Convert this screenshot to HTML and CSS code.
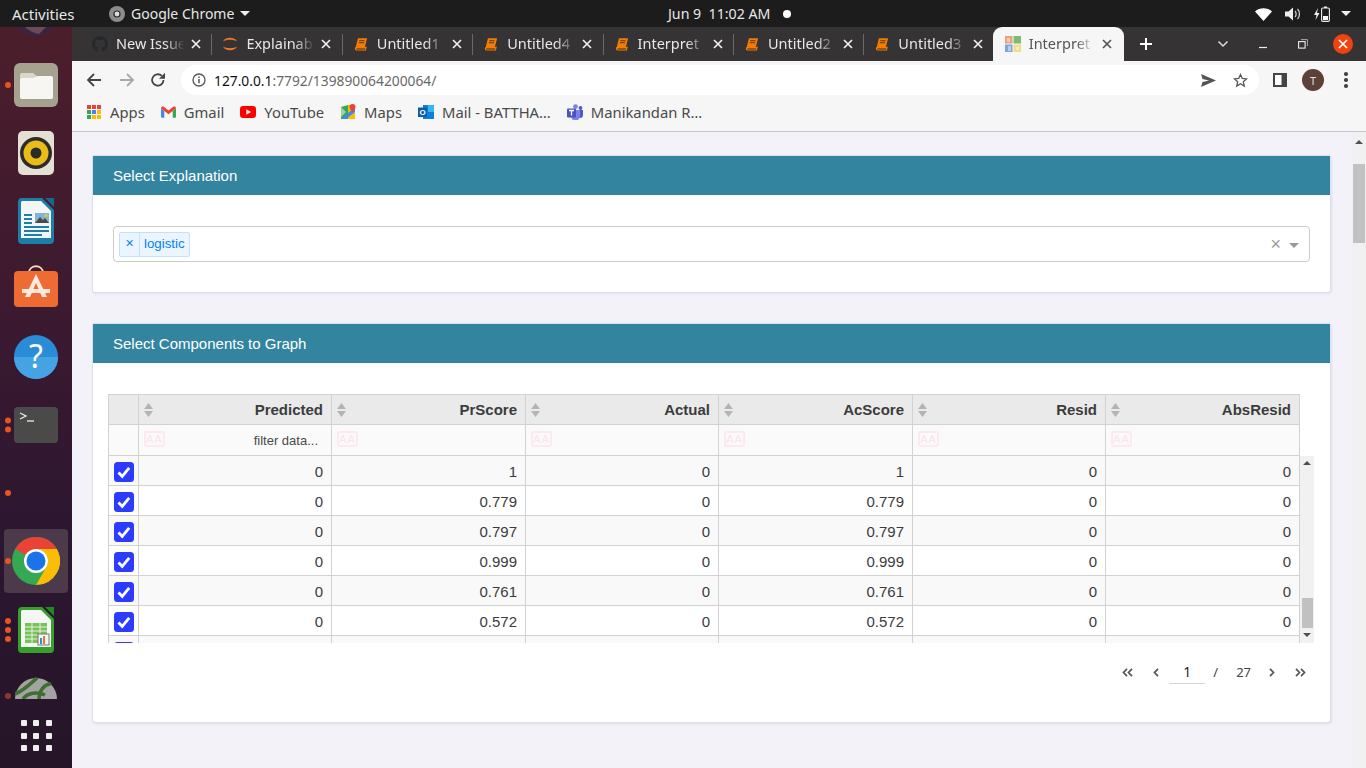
FILE: index.html
```html
<!DOCTYPE html>
<html lang="en">
<head>
<meta charset="utf-8">
<title>Interpret</title>
<link rel="stylesheet" href="styles.css">
</head>
<body>
<svg class="defs" width="0" height="0">
  <symbol id="book" viewBox="0 0 16 16"><path d="M4.500 1.500h10.500l-2.600 10H2z" fill="#f57c00"/><path d="M1 13.200c0-1.200.6-1.700 1.600-1.700h10.200l1.600-1v1.600l-.8 3.400H3c-1.300 0-2-.9-2-2.300z" fill="#f57c00"/><path d="M2.600 13h10.300l-.4 1.400H2.800z" fill="#353334"/><path d="M6 4.200h6M5.500 6.500h6" stroke="#353334" stroke-width="1"/></symbol>
  <symbol id="x" viewBox="0 0 10 10"><path d="M1 1l8 8M9 1l-8 8" stroke="currentColor" stroke-width="1.700" fill="none"/></symbol>
  <symbol id="sort" viewBox="0 0 9 14"><path d="M4.500 0L9 6H0zM0 8h9l-4.500 6z" fill="#b4b4b4"/></symbol>
  <symbol id="chk" viewBox="0 0 20 20"><rect width="20" height="20" rx="3.500" fill="#2b3cff"/><path d="M4.500 10.500l3.700 3.800 7-8.500" fill="none" stroke="#fff" stroke-width="2.800"/></symbol>
</svg>

<header class="topbar">
  <span class="activities">Activities</span>
  <span class="app">
    <svg class="app-ico" width="16" height="16" viewBox="0 0 16 16"><circle cx="8" cy="8" r="8" fill="#8c8c8c"/><circle cx="8" cy="8" r="3.600" fill="#2a2a2a"/><circle cx="8" cy="8" r="2.400" fill="#ddd"/></svg>
    Google Chrome<i class="caret"></i>
  </span>
  <span class="clock">Jun 9 &nbsp;11:02 AM<i class="rec"></i></span>
  <span class="tray">
    <svg width="17" height="14" viewBox="0 0 17 14"><path d="M0 4.500C4.500.2 12.500.2 17 4.500L8.500 14z" fill="#fff"/></svg>
    <svg width="16" height="14" viewBox="0 0 16 14"><path d="M0 4.500h3.500L8 .5v13l-4.500-4H0z" fill="#eee"/><path d="M10 4c1.500 1.500 1.500 4.500 0 6M12.500 2c2.600 2.600 2.600 7.400 0 10" stroke="#ccc" stroke-width="1.300" fill="none"/></svg>
    <svg width="16" height="16" viewBox="0 0 16 16"><path d="M4 2L0 9h2.500L1.500 14 5.500 7H3z" fill="#eee"/><rect x="7.600" y="2" width="7.800" height="13.400" rx="1.300" fill="none" stroke="#eee" stroke-width="1.100"/><rect x="10" y=".5" width="3" height="1.500" fill="#eee"/><rect x="9" y="10" width="5" height="4" fill="#fff"/></svg>
    <i class="caret tray-caret"></i>
  </span>
</header>

<div class="main">
  <nav class="dock">
    <div class="d-item d-top"><svg width="42" height="10" viewBox="0 0 42 10"><path d="M2 0c3 5 11 9 19 10 8-1 14-6 18-10z" fill="#3a2440"/><path d="M10 0c3 3 8 6 14 7l7-7z" fill="#6b4a5c"/></svg></div>

    <div class="d-item d-files"><span class="dots"><i></i></span>
      <svg width="44" height="44" viewBox="0 0 44 44"><rect width="44" height="44" rx="6" fill="#a7a18f"/><path d="M6 12a2 2 0 0 1 2-2h11l5 4h13a2 2 0 0 1 2 2v18a2 2 0 0 1-2 2H8a2 2 0 0 1-2-2z" fill="#d9d6ca"/><path d="M6 17a2 2 0 0 1 2-2h11l5-2h13a2 2 0 0 1 2 2v19a2 2 0 0 1-2 2H8a2 2 0 0 1-2-2z" fill="#f7f6f3"/></svg></div>

    <div class="d-item d-rhythm">
      <svg width="36" height="44" viewBox="0 0 36 44"><rect width="36" height="44" rx="5" fill="#e4e0d4"/><circle cx="18" cy="22" r="16" fill="#2d2c2b"/><circle cx="18" cy="22" r="12.500" fill="#e9bc17"/><circle cx="18" cy="22" r="5.500" fill="#2a2a2a"/></svg></div>

    <div class="d-item d-writer">
      <svg width="36" height="46" viewBox="0 0 36 46"><path d="M27 0h9v9z" fill="#15688f"/><path d="M4 0h20l12 12v30a4 4 0 0 1-4 4H4a4 4 0 0 1-4-4V4a4 4 0 0 1 4-4z" fill="#1d7fa8"/><path d="M4 3h19l10 10v27H3V4z" fill="#f4f5f5"/><path d="M6 16h8v2H6zM6 20h8v2H6zM6 24h8v2H6zM6 28h25v2H6zM6 32h25v2H6zM6 36h18v2H6z" fill="#1d7fa8"/><rect x="17" y="15" width="14" height="10" fill="#7fb6d3"/><path d="M17 25l5-6 3 3 2-2 4 5z" fill="#4a4a4a"/><circle cx="28" cy="17.500" r="1.600" fill="#f2c230"/></svg></div>

    <div class="d-item d-store">
      <svg width="44" height="42" viewBox="0 0 44 42"><path d="M15 8c0-9 14-9 14 0" fill="none" stroke="#f1d7b5" stroke-width="1.800"/><rect y="6" width="44" height="36" rx="4" fill="#ee6b34"/><path d="M22 9L11 32h5l6-14 6 14h5z" fill="#fbe9df"/><path d="M8 24h28v4H8z" fill="#fbe9df"/></svg></div>

    <div class="d-item d-help">
      <svg width="44" height="44" viewBox="0 0 44 44"><circle cx="22" cy="22" r="22" fill="#2a8bd6"/><path d="M0 22h44a22 22 0 0 1-44 0z" fill="#45a3e4"/><text x="22" y="33" class="help-q">?</text></svg></div>

    <div class="d-item d-term"><span class="dots"><i></i><i></i></span>
      <svg width="44" height="36" viewBox="0 0 44 36"><rect width="44" height="36" rx="4" fill="#4a4a48"/><path d="M6 6l6 3-6 3" fill="none" stroke="#eee" stroke-width="1.300"/><path d="M13 14h7" stroke="#eee" stroke-width="1.300"/></svg></div>

    <div class="d-item d-ghost"><span class="dots"><i></i></span></div>

    <div class="d-item d-chrome"><span class="dots"><i></i></span>
      <svg width="48" height="48" viewBox="0 0 48 48"><circle cx="24" cy="24" r="24" fill="#34a853"/><path d="M24 0a24 24 0 0 1 20.800 12H24a12 12 0 0 0-10.400 6L3.200 12A24 24 0 0 1 24 0z" fill="#ea4335"/><path d="M44.800 12A24 24 0 0 1 24 48l10.400-18A12 12 0 0 0 24 12z" fill="#fbbc04"/><circle cx="24" cy="24" r="12" fill="#fff"/><circle cx="24" cy="24" r="9.500" fill="#1a73e8"/></svg></div>

    <div class="d-item d-calc"><span class="dots"><i></i><i></i><i></i></span>
      <svg width="36" height="46" viewBox="0 0 36 46"><path d="M27 0h9v9z" fill="#1f8a22"/><path d="M4 0h20l12 12v30a4 4 0 0 1-4 4H4a4 4 0 0 1-4-4V4a4 4 0 0 1 4-4z" fill="#37a02c"/><path d="M4 3h19l10 10v27H3V4z" fill="#f4f5f5"/><path d="M7 16h22v20H7z" fill="#79c257"/><path d="M7 20h22M7 24h22M7 28h22M7 32h22M14 16v20M22 16v20" stroke="#f4f5f5" stroke-width=".9"/><rect x="20" y="27" width="11" height="11" fill="#f4f5f5" stroke="#777"/><path d="M22 31h2v6h-2z" fill="#2b8fd6"/><path d="M25 29h2v8h-2z" fill="#e2762b"/></svg></div>

    <div class="d-item d-partial"><span class="dots dim"><i></i></span>
      <svg width="42" height="22" viewBox="0 0 42 22"><path d="M0 22a21 21 0 0 1 42 0z" fill="#a3a3a3"/><path d="M0 17C8 14 14 8 22 1M24 22C24 14 30 6 36 7M8 22c4-6 14-8 22-4" fill="none" stroke="#3f6e2f" stroke-width="3.500"/></svg></div>

    <div class="d-item d-grid"><span class="apps"><i></i><i></i><i></i><i></i><i></i><i></i><i></i><i></i><i></i></span></div>
  </nav>

  <div class="browser">
    <div class="tabstrip">
      <div class="tab"><svg class="t-ico" width="16" height="16" viewBox="0 0 16 16"><path fill="#24292e" d="M8 0a8 8 0 0 0-2.500 15.600c.4.100.5-.2.500-.4v-1.400c-2.200.5-2.700-1-2.700-1-.4-.9-.9-1.200-.9-1.200-.7-.5.100-.5.100-.5.800.1 1.200.8 1.200.8.700 1.200 1.900.9 2.300.7.100-.5.300-.9.500-1.100-1.800-.2-3.600-.9-3.600-4 0-.9.300-1.600.8-2.100-.1-.2-.4-1 .1-2.100 0 0 .7-.2 2.200.8a7.600 7.600 0 0 1 4 0c1.500-1 2.200-.8 2.200-.8.400 1.100.2 1.900.1 2.100.5.600.8 1.300.8 2.100 0 3.100-1.900 3.700-3.700 3.900.3.300.6.800.6 1.500v2.200c0 .2.100.5.600.4A8 8 0 0 0 8 0z"/></svg><span class="t-label">New Issue</span><svg class="t-x" width="10" height="10"><use href="#x"/></svg></div>
      <div class="tab"><svg class="t-ico" width="16" height="16" viewBox="0 0 16 16"><path d="M1 5.500C3 .5 13 .5 15 5.500 12 3.200 4 3.200 1 5.500zM1 10.500C3 15.500 13 15.500 15 10.500 12 12.800 4 12.800 1 10.500z" fill="#f37726"/></svg><span class="t-label">Explainab</span><svg class="t-x" width="10" height="10"><use href="#x"/></svg></div>
      <div class="tab"><svg class="t-book" width="14" height="14"><use href="#book"/></svg><span class="t-label">Untitled1</span><svg class="t-x" width="10" height="10"><use href="#x"/></svg></div>
      <div class="tab"><svg class="t-book" width="14" height="14"><use href="#book"/></svg><span class="t-label">Untitled4</span><svg class="t-x" width="10" height="10"><use href="#x"/></svg></div>
      <div class="tab"><svg class="t-book" width="14" height="14"><use href="#book"/></svg><span class="t-label">Interpret</span><svg class="t-x" width="10" height="10"><use href="#x"/></svg></div>
      <div class="tab"><svg class="t-book" width="14" height="14"><use href="#book"/></svg><span class="t-label">Untitled2</span><svg class="t-x" width="10" height="10"><use href="#x"/></svg></div>
      <div class="tab nosep"><svg class="t-book" width="14" height="14"><use href="#book"/></svg><span class="t-label">Untitled3</span><svg class="t-x" width="10" height="10"><use href="#x"/></svg></div>
      <div class="tab active"><svg class="t-ico" width="16" height="16" viewBox="0 0 16 16"><rect width="7.500" height="7.500" fill="#e8a27c"/><rect x="8.500" width="7.500" height="7.500" fill="#7dbb6f"/><rect y="8.500" width="7.500" height="7.500" fill="#7fa6dc"/><rect x="8.500" y="8.500" width="7.500" height="7.500" fill="#f0dc8c"/><path d="M2 2h3v4H2zM10 5l4-3M3 10h3v5H3zM11 11h3v3h-3z" fill="#fff" opacity=".45"/></svg><span class="t-label">Interpret</span><svg class="t-x" width="10" height="10"><use href="#x"/></svg></div>
      <svg class="newtab" width="14" height="14" viewBox="0 0 14 14"><path d="M7 1v12M1 7h12" stroke="#fff" stroke-width="2"/></svg>
      <div class="winctl">
        <span class="wc"><svg width="12" height="8" viewBox="0 0 12 8"><path d="M1.500 1.500L6 6l4.500-4.500" fill="none" stroke="#ddd" stroke-width="1.500"/></svg></span>
        <span class="wc"><svg width="10" height="10" viewBox="0 0 10 10"><path d="M1 8.500h8" stroke="#eee" stroke-width="1.200"/></svg></span>
        <span class="wc"><svg width="10" height="10" viewBox="0 0 10 10"><rect x=".6" y="2.600" width="6.500" height="6.500" fill="none" stroke="#eee" stroke-width="1.100"/><path d="M3 .6h6.400V7" fill="none" stroke="#aaa" stroke-width="1"/></svg></span>
        <span class="wc"><span class="closebtn"><svg width="10" height="10"><use href="#x"/></svg></span></span>
      </div>
    </div>

    <div class="toolbar">
      <svg class="tb-b" width="16" height="16" viewBox="0 0 16 16"><path d="M15 8H2M8 2L2 8l6 6" fill="none" stroke="#444" stroke-width="1.800"/></svg>
      <svg class="tb-f" width="16" height="16" viewBox="0 0 16 16"><path d="M1 8h13M8 2l6 6-6 6" fill="none" stroke="#a9a9a9" stroke-width="1.800"/></svg>
      <svg class="tb-r" width="16" height="16" viewBox="0 0 16 16"><path d="M13.500 8A5.700 5.700 0 1 1 11.800 3.900" fill="none" stroke="#444" stroke-width="1.800"/><path d="M15 .8v6h-6z" fill="#444"/></svg>
      <div class="omnibox">
        <svg width="14" height="14" viewBox="0 0 14 14"><circle cx="7" cy="7" r="6" fill="none" stroke="#555" stroke-width="1.300"/><path d="M7 6v4.200M7 3.500v1.500" stroke="#555" stroke-width="1.500"/></svg>
        <span class="url"><b>127.0.0.1</b>:7792/139890064200064/</span>
        <svg class="send" width="15" height="13" viewBox="0 0 15 13"><path d="M0 0l15 6.500L0 13l1.500-5L8 6.500 1.500 5z" fill="#555"/></svg>
        <svg class="star" width="15" height="15" viewBox="0 0 15 15"><path d="M7.500 1.500l1.800 4 4.300.4-3.300 2.900 1 4.300-3.800-2.300-3.800 2.300 1-4.300L1.400 5.900l4.300-.4z" fill="none" stroke="#555" stroke-width="1.300"/></svg>
      </div>
      <svg class="panel" width="14" height="14" viewBox="0 0 14 14"><path d="M0 0h14v14H0z" fill="#444"/><path d="M2 2h6.500v10H2z" fill="#fff"/></svg>
      <span class="avatar">T</span>
      <span class="kebab"><i></i><i></i><i></i></span>
    </div>

    <div class="bookmarks">
      <span class="bm"><span class="appsgrid"><i class="r"></i><i class="r"></i><i class="r"></i><i class="g"></i><i class="b"></i><i class="y"></i><i class="g"></i><i class="y"></i><i class="y"></i></span>Apps</span>
      <span class="bm"><svg width="15" height="12" viewBox="0 0 16 12"><path d="M0 2v9a1 1 0 0 0 1 1h2.500V5z" fill="#4285f4"/><path d="M16 2v9a1 1 0 0 1-1 1h-2.500V5z" fill="#34a853"/><path d="M0 2c0-1.600 1.700-2.400 3-1.500L8 4.500l5-4c1.300-.9 3-.1 3 1.500l-3.500 3L8 8.500 3.500 5z" fill="#ea4335"/></svg>Gmail</span>
      <span class="bm"><svg width="16" height="12" viewBox="0 0 16 12"><rect width="16" height="12" rx="3" fill="#f00"/><path d="M6.300 3.300v5.400L11 6z" fill="#fff"/></svg>YouTube</span>
      <span class="bm"><svg width="16" height="16" viewBox="0 0 16 16"><path d="M1 3l7-2v14H1z" fill="#34a853"/><path d="M8 1h7v14H8z" fill="#fbbc04"/><path d="M1 15L15 3v5L6 15z" fill="#4285f4"/><path d="M1 3l5 5-5 5z" fill="#9fd39f"/><path d="M12.500 0a3 3 0 0 1 3 3c0 2-3 5-3 5s-3-3-3-5a3 3 0 0 1 3-3z" fill="#ea4335"/></svg>Maps</span>
      <span class="bm"><svg width="16" height="16" viewBox="0 0 16 16"><path d="M5 1h11v14H5z" fill="#0f7fd6"/><path d="M10 1h6v7h-6z" fill="#37b5ee"/><rect y="3.500" width="9" height="9.500" fill="#0a5ea8"/><text x="4.500" y="11" class="ol">O</text></svg>Mail - BATTHA…</span>
      <span class="bm"><svg width="16" height="16" viewBox="0 0 16 16"><circle cx="8.500" cy="2.600" r="2.400" fill="#7b83eb"/><circle cx="13.500" cy="4" r="1.900" fill="#5059c9"/><path d="M10 6h6v5a3 3 0 0 1-6 0z" fill="#5059c9"/><path d="M4 6h9v6a4.500 4.500 0 0 1-9 0z" fill="#7b83eb"/><rect y="4.500" width="9" height="9" rx="1" fill="#4b53bc"/><path d="M2 6.500h5M4.500 6.500v5" stroke="#fff" stroke-width="1.300"/></svg>Manikandan R…</span>
    </div>

    <div class="viewport">
      <main class="page">
        <section class="card card-select">
          <h2 class="card-head">Select Explanation</h2>
          <div class="card-body select-body">
            <div class="select">
              <span class="chip"><span class="chip-x">×</span><span class="chip-label">logistic</span></span>
              <span class="select-clear">×</span>
              <i class="select-arrow"></i>
            </div>
          </div>
        </section>

        <section class="card card-graph">
          <h2 class="card-head">Select Components to Graph</h2>
          <div class="card-body graph-body">
            <div class="table-wrap">
              <div class="table-clip">
                <table class="grid">
                  <colgroup><col class="c0"><col class="c1"><col class="c2"><col class="c1"><col class="c2"><col class="c1"><col class="c2"></colgroup>
                  <thead>
                    <tr class="h-row">
                      <th></th>
                      <th><svg class="sort" width="9" height="14"><use href="#sort"/></svg>Predicted</th>
                      <th><svg class="sort" width="9" height="14"><use href="#sort"/></svg>PrScore</th>
                      <th><svg class="sort" width="9" height="14"><use href="#sort"/></svg>Actual</th>
                      <th><svg class="sort" width="9" height="14"><use href="#sort"/></svg>AcScore</th>
                      <th><svg class="sort" width="9" height="14"><use href="#sort"/></svg>Resid</th>
                      <th><svg class="sort" width="9" height="14"><use href="#sort"/></svg>AbsResid</th>
                    </tr>
                    <tr class="f-row">
                      <td></td>
                      <td><span class="aa">AA</span><span class="ph">filter data...</span></td>
                      <td><span class="aa">AA</span></td>
                      <td><span class="aa">AA</span></td>
                      <td><span class="aa">AA</span></td>
                      <td><span class="aa">AA</span></td>
                      <td><span class="aa">AA</span></td>
                    </tr>
                  </thead>
                  <tbody>
                    <tr><td class="ck"><svg width="20" height="20"><use href="#chk"/></svg></td><td>0</td><td>1</td><td>0</td><td>1</td><td>0</td><td>0</td></tr>
                    <tr><td class="ck"><svg width="20" height="20"><use href="#chk"/></svg></td><td>0</td><td>0.779</td><td>0</td><td>0.779</td><td>0</td><td>0</td></tr>
                    <tr><td class="ck"><svg width="20" height="20"><use href="#chk"/></svg></td><td>0</td><td>0.797</td><td>0</td><td>0.797</td><td>0</td><td>0</td></tr>
                    <tr><td class="ck"><svg width="20" height="20"><use href="#chk"/></svg></td><td>0</td><td>0.999</td><td>0</td><td>0.999</td><td>0</td><td>0</td></tr>
                    <tr><td class="ck"><svg width="20" height="20"><use href="#chk"/></svg></td><td>0</td><td>0.761</td><td>0</td><td>0.761</td><td>0</td><td>0</td></tr>
                    <tr><td class="ck"><svg width="20" height="20"><use href="#chk"/></svg></td><td>0</td><td>0.572</td><td>0</td><td>0.572</td><td>0</td><td>0</td></tr>
                    <tr><td class="ck"><svg width="20" height="20"><use href="#chk"/></svg></td><td></td><td></td><td></td><td></td><td></td><td></td></tr>
                  </tbody>
                </table>
              </div>
              <div class="inner-scroll">
                <i class="arr-up"></i>
                <i class="inner-thumb"></i>
                <i class="arr-down"></i>
              </div>
            </div>
            <div class="pager">
              <svg width="11" height="9" viewBox="0 0 11 9"><path d="M5 .8L1.500 4.500 5 8.200M10 .8L6.500 4.500 10 8.200" fill="none" stroke="#555" stroke-width="1.700"/></svg>
              <svg class="p-prev" width="6" height="9" viewBox="0 0 6 9"><path d="M5 .8L1.500 4.500 5 8.200" fill="none" stroke="#555" stroke-width="1.700"/></svg>
              <span class="p-cur">1</span>
              <span class="p-slash">/</span>
              <span class="p-total">27</span>
              <svg class="p-next" width="6" height="9" viewBox="0 0 6 9"><path d="M1 .8L4.500 4.500 1 8.200" fill="none" stroke="#555" stroke-width="1.700"/></svg>
              <svg class="p-last" width="11" height="9" viewBox="0 0 11 9"><path d="M1 .8L4.500 4.500 1 8.200M6 .8L9.500 4.500 6 8.200" fill="none" stroke="#555" stroke-width="1.700"/></svg>
            </div>
          </div>
        </section>
      </main>
      <aside class="page-scroll">
        <i class="arr-up page-up"></i>
        <i class="page-thumb"></i>
      </aside>
    </div>
  </div>
</div>
</body>
</html>
```

FILE: styles.css
```css
* { box-sizing: border-box; }
html, body { margin: 0; padding: 0; }
body {
  width: 1366px;
  height: 768px;
  overflow: hidden;
  display: flex;
  flex-direction: column;
  font-family: "Noto Sans", sans-serif;
  background: #f2f2f8;
}
.defs { position: absolute; }
i { display: block; font-style: normal; }

/* top bar */
.topbar {
  height: 27px;
  flex: none;
  background: #1c1c1c;
  color: #e8e8e8;
  display: flex;
  align-items: center;
  font-size: 14px;
  position: relative;
}
.activities { margin-left: 12px; width: 97px; font-size: 15px; }
.app { display: flex; align-items: center; }
.app-ico { margin-right: 6px; }
.caret {
  width: 0; height: 0;
  border-left: 5px solid transparent;
  border-right: 5px solid transparent;
  border-top: 5px solid #eee;
  margin-left: 6px;
}
.clock { position: absolute; left: 668px; top: 4px; display: flex; align-items: center; line-height: 19px; font-size: 14.200px; }
.rec { width: 8px; height: 8px; border-radius: 50%; background: #fff; margin-left: 13px; }
.tray { margin-left: auto; display: flex; align-items: center; gap: 13px; padding-right: 15px; }
.tray-caret { margin-left: -2px; }

.main { flex: 1; display: flex; min-height: 0; }

/* dock */
.dock {
  width: 72px;
  flex: none;
  background: linear-gradient(180deg, #4c1e2b 0%, #3d1a30 35%, #2b1630 70%, #261529 100%);
  display: flex;
  flex-direction: column;
  align-items: center;
  overflow: hidden;
}
.d-item { position: relative; display: flex; justify-content: center; align-items: center; width: 100%; flex: none; }
.d-item svg { display: block; }
.dots { position: absolute; left: 5px; top: 50%; transform: translateY(-50%); display: flex; flex-direction: column; gap: 3px; }
.dots i { width: 6px; height: 6px; border-radius: 50%; background: #e95420; }
.dots.dim { top: 19px; opacity: .55; }
.d-top { height: 10px; }
.d-files { margin-top: 26px; height: 44px; }
.d-rhythm { margin-top: 24px; height: 44px; }
.d-writer { margin-top: 23px; height: 46px; }
.d-store { margin-top: 21px; height: 42px; }
.d-help { margin-top: 28px; height: 44px; }
.d-term { margin-top: 28px; height: 36px; }
.d-ghost { margin-top: 28px; height: 44px; }
.d-chrome { margin: 14px 4px 0; width: 64px; height: 64px; background: #4c3a4b; border-radius: 4px; }
.d-chrome .dots { left: 1px; }
.d-calc { margin-top: 14px; height: 46px; }
.d-partial { margin-top: 24px; height: 22px; }
.d-grid { margin-top: 21px; height: 31px; }
.d-grid .apps { display: grid; grid-template-columns: repeat(3, 6px); gap: 6.500px; }
.apps i { width: 6px; height: 6px; border-radius: 1px; background: #eee; }

/* browser */
.browser { flex: 1; display: flex; flex-direction: column; min-width: 0; }
.tabstrip {
  height: 34px;
  flex: none;
  background: #353334;
  padding-left: 10px;
  display: flex;
  align-items: stretch;
  color: #e8e8e8;
}
.tab {
  width: 130.400px;
  display: flex;
  align-items: center;
  padding-left: 10px;
  font-size: 14.500px;
  position: relative;
  flex: none;
}
.tab::after {
  content: "";
  position: absolute;
  right: 0;
  top: 7px;
  bottom: 6px;
  width: 1px;
  background: #6a6869;
}
.tab.nosep::after, .tab.active::after { display: none; }
.t-ico { flex: none; }
.t-book { flex: none; margin: 0 1px; }
.t-label {
  margin-left: 8px;
  margin-top: -2px;
  width: 70px;
  white-space: nowrap;
  overflow: hidden;
  -webkit-mask-image: linear-gradient(90deg, #000 70%, transparent 98%);
  mask-image: linear-gradient(90deg, #000 70%, transparent 98%);
}
.t-x { margin-left: 5px; color: #f0f0f0; }
.tab.active {
  width: 131px;
  margin-left: -2px;
  padding-left: 12px;
  background: #f6f6f6;
  color: #555;
  border-radius: 9px 9px 0 0;
}
.tab.active .t-label { width: 67px; }
.tab.active .t-x { color: #555; margin-left: 6px; }
.newtab { align-self: center; margin-left: 15px; }
.winctl { margin-left: auto; display: flex; align-items: center; padding-right: 3px; }
.wc { width: 40px; display: flex; align-items: center; justify-content: center; }
.closebtn {
  width: 20px; height: 20px;
  border-radius: 50%;
  background: #f0430f;
  color: #fff;
  display: flex;
  align-items: center;
  justify-content: center;
}

.toolbar {
  height: 38px;
  flex: none;
  background: #f6f6f6;
  display: flex;
  align-items: center;
  padding-left: 14px;
}
.tb-f { margin-left: 17px; }
.tb-r { margin-left: 15px; }
.omnibox {
  margin-left: 15px;
  width: 1078px;
  height: 30px;
  border-radius: 15px;
  background: #fff;
  display: flex;
  align-items: center;
  padding-left: 11px;
  font-size: 13.800px;
}
.url { margin-left: 8px; color: #6a6a6a; }
.url b { font-weight: 400; color: #111; }
.send { margin-left: auto; }
.star { margin-left: 17px; margin-right: 11px; }
.panel { margin-left: 14px; }
.avatar {
  margin-left: 15px;
  width: 22px; height: 22px;
  border-radius: 50%;
  background: #5d4037;
  color: #ddd;
  font-size: 11px;
  display: flex;
  align-items: center;
  justify-content: center;
}
.kebab { margin-left: 20px; display: flex; flex-direction: column; gap: 2.500px; }
.kebab i { width: 3.500px; height: 3.500px; border-radius: 50%; background: #444; }

.bookmarks {
  height: 33px;
  flex: none;
  padding: 0 0 6px 15px;
  background: #f6f6f6;
  border-bottom: 1px solid #c6c6d2;
  display: flex;
  align-items: center;
  font-size: 14.800px;
  color: #4a4a4a;
  gap: 16px;
}
.bm { display: flex; align-items: center; gap: 8px; }
.appsgrid { display: grid; grid-template-columns: repeat(3, 4px); gap: 1px; margin-right: 1px; }
.appsgrid i { width: 4px; height: 4px; }
.appsgrid .r { background: #ea4335; }
.appsgrid .g { background: #34a853; }
.appsgrid .b { background: #4285f4; }
.appsgrid .y { background: #fbbc04; }
.ol { font: 700 8px "Liberation Sans", sans-serif; fill: #fff; text-anchor: middle; }
.help-q { font: 400 32px "Noto Sans", sans-serif; fill: #fff; text-anchor: middle; }

/* page */
.viewport { flex: 1; display: flex; min-height: 0; background: #f2f2f8; }
.page { flex: 1; padding: 24px 22px 0 21px; min-width: 0; font-family: "Liberation Sans", Arial, sans-serif; }
.card {
  background: #fff;
  border-radius: 2px;
  box-shadow: 0 0 0 1px #dcdff0, 1px 1px 3px rgba(90, 100, 170, .25);
}
.card-select { height: 136px; }
.card-graph { height: 398px; margin-top: 32px; }
.card-head {
  margin: 0;
  height: 39px;
  background: #32849f;
  color: #fff;
  font-size: 15px;
  font-weight: 400;
  line-height: 39px;
  padding-left: 20px;
}
.select-body { padding: 31px 20px 0; }
.select {
  height: 36px;
  border: 1px solid #ccc;
  border-radius: 4px;
  display: flex;
  align-items: center;
  padding-left: 5px;
}
.chip {
  display: flex;
  height: 25px;
  background: #ebf5ff;
  border: 1px solid #c2e0ff;
  border-radius: 2px;
  color: #007eff;
  font-size: 13.300px;
  line-height: 21px;
}
.chip-x { width: 20px; text-align: center; border-right: 1px solid #c2e0ff; font-size: 14px; line-height: 20px; }
.chip-label { padding: 0 4px; }
.select-clear { margin-left: auto; color: #999; font-size: 18px; line-height: 1; margin-right: 1px; }
.select-arrow {
  margin: 2px 10px 0 7px;
  width: 0; height: 0;
  border-left: 5px solid transparent;
  border-right: 5px solid transparent;
  border-top: 5px solid #999;
}

.graph-body { padding: 31px 0 0 15px; }
.table-wrap { display: flex; align-items: flex-start; }
.table-clip { width: 1192px; height: 249px; overflow: hidden; flex: none; }
.grid {
  width: 1192px;
  table-layout: fixed;
  border-collapse: collapse;
  font-size: 15px;
  color: #3c3c3c;
}
.c0 { width: 30px; }
.c1 { width: 193px; }
.c2 { width: 194px; }
.grid th, .grid td {
  border: 1px solid #d2d2d2;
  height: 30px;
  padding: 0 8px;
  text-align: right;
  position: relative;
}
.grid th { background: #eaeaea; font-weight: 700; }
.f-row td { background: #fafafa; height: 31px; font-size: 13px; }
.grid tbody td { padding-top: 2px; }
.grid tbody tr:nth-child(odd) td { background: #f9f9f9; }
.grid tbody tr:nth-child(even) td { background: #fff; }
.grid .ck { padding: 2px 0 0; text-align: center; }
.ck svg { display: block; margin: 0 auto; }
.sort { position: absolute; left: 5px; top: 8px; }
.aa {
  position: absolute;
  left: 5px;
  top: 6px;
  width: 21px;
  height: 16px;
  border: 2px solid #fde9ee;
  border-radius: 3px;
  color: #fde3ea;
  font-size: 11px;
  line-height: 12px;
  text-align: center;
  letter-spacing: 1px;
}
.ph { color: #4a4a4a; padding-right: 5px; }

.inner-scroll {
  width: 14px;
  height: 187px;
  margin-top: 62px;
  background: #f1f1f1;
  flex: none;
  display: flex;
  flex-direction: column;
  align-items: center;
  position: relative;
}
.arr-up {
  width: 0; height: 0;
  border-left: 4px solid transparent;
  border-right: 4px solid transparent;
  border-bottom: 4px solid #505050;
  margin-top: 5px;
}
.arr-down {
  width: 0; height: 0;
  border-left: 4px solid transparent;
  border-right: 4px solid transparent;
  border-top: 4px solid #505050;
  margin-top: 5px;
}
.inner-thumb { width: 11px; height: 30px; background: #c1c1c1; margin-top: 133px; }

.pager {
  margin-top: 20px;
  padding-right: 24px;
  height: 18px;
  display: flex;
  align-items: center;
  justify-content: flex-end;
  font-family: "Noto Sans", sans-serif;
  color: #444;
  font-size: 13px;
}
.p-prev { margin-left: 20px; }
.p-cur {
  margin-left: 10px;
  width: 36px;
  height: 24px;
  text-align: center;
  font-size: 14px;
  line-height: 24px;
  color: #222;
  border-bottom: 1px solid #d5d5d5;
}
.p-slash { margin-left: 8px; }
.p-total { margin-left: 18px; }
.p-next { margin-left: 18px; }
.p-last { margin-left: 20px; }

.page-scroll { width: 14px; flex: none; background: #f1f1f1; display: flex; flex-direction: column; align-items: center; }
.page-up { margin-top: 8px; }
.page-thumb { width: 12px; height: 79px; background: #c1c1c1; margin-top: 20px; }
```
